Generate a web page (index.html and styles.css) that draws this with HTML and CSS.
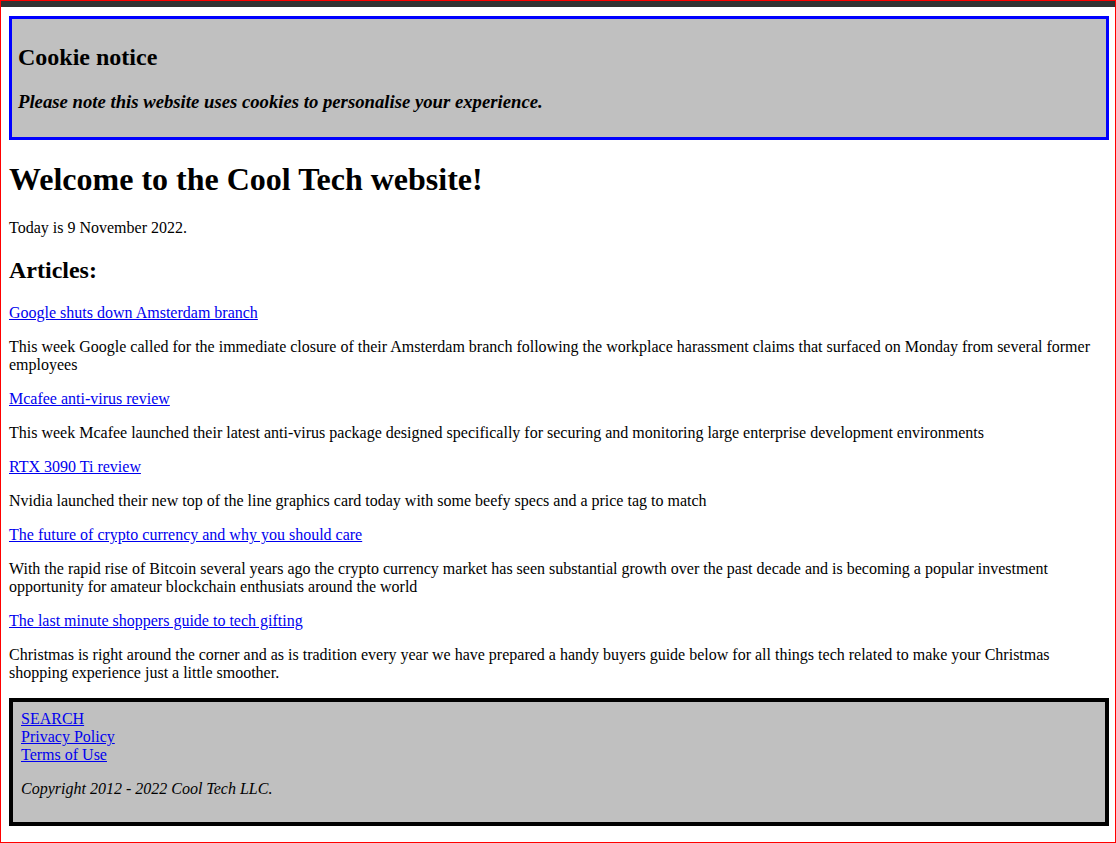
FILE: index.html
```html
<!DOCTYPE html>
<html lang="en">
<head>
<meta charset="utf-8">
<title>Cool Tech</title>
<link rel="stylesheet" href="styles.css">
</head>
<body>
<div class="frame">
  <div class="titlebar"></div>
  <div class="page">
    <div class="cookie">
      <h2>Cookie notice</h2>
      <h3 class="cookie-text">Please note this website uses cookies to personalise your experience.</h3>
    </div>

    <h1>Welcome to the Cool Tech website!</h1>
    <p>Today is 9 November 2022.</p>

    <h2>Articles:</h2>
    <p><a href="#">Google shuts down Amsterdam branch</a></p>
    <p>This week Google called for the immediate closure of their Amsterdam branch following the workplace harassment claims that surfaced on Monday from several former employees</p>
    <p><a href="#">Mcafee anti-virus review</a></p>
    <p>This week Mcafee launched their latest anti-virus package designed specifically for securing and monitoring large enterprise development environments</p>
    <p><a href="#">RTX 3090 Ti review</a></p>
    <p>Nvidia launched their new top of the line graphics card today with some beefy specs and a price tag to match</p>
    <p><a href="#">The future of crypto currency and why you should care</a></p>
    <p>With the rapid rise of Bitcoin several years ago the crypto currency market has seen substantial growth over the past decade and is becoming a popular investment opportunity for amateur blockchain enthusiats around the world</p>
    <p><a href="#">The last minute shoppers guide to tech gifting</a></p>
    <p>Christmas is right around the corner and as is tradition every year we have prepared a handy buyers guide below for all things tech related to make your Christmas shopping experience just a little smoother.</p>

    <footer class="footer">
      <a href="#">SEARCH</a><br>
      <a href="#">Privacy Policy</a><br>
      <a href="#">Terms of Use</a>
      <p class="copyright">Copyright 2012 - 2022 Cool Tech LLC.</p>
    </footer>
  </div>
</div>
</body>
</html>
```
FILE: styles.css
```css
html, body {
  margin: 0;
  padding: 0;
  background: #ffffff;
}

body {
  font-family: "Liberation Serif", "Times New Roman", serif;
  font-size: 16px;
  color: #000000;
}

.frame {
  box-sizing: border-box;
  height: 843px;
  border: 1px solid #ff0000;
  overflow: hidden;
}

.titlebar {
  height: 6px;
  background: #333333;
}

.page {
  padding: 9px 6px 0 8px;
}

a {
  color: #0000ee;
}

.cookie {
  background: #c0c0c0;
  border: 3px solid #0000ff;
  padding: 5px 6px 5px;
}

.cookie-text {
  font-style: italic;
}

.footer {
  display: block;
  margin: 16px 0;
  background: #c0c0c0;
  border: 4px solid #000000;
  padding: 8px 8px 8px 8px;
}

.copyright {
  font-style: italic;
  margin: 16px 0;
}
```
